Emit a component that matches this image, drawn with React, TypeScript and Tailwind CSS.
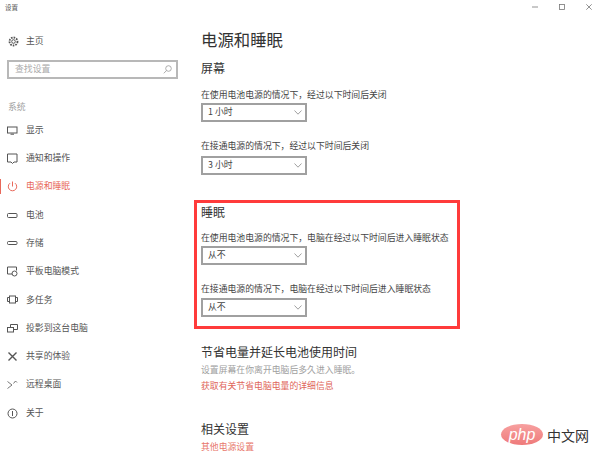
import React from "react";

const cjk = { fontFamily: '"Noto Sans CJK SC", sans-serif' };

const s = { fill: "none", stroke: "currentColor", strokeWidth: 1 };

function Ico({ children }: { children: React.ReactNode }) {
  return (
    <svg width="11" height="11" viewBox="0 0 11 11" {...s} className="shrink-0">
      {children}
    </svg>
  );
}

const items: [string, React.ReactNode, boolean?][] = [
  ["显示", <><rect x=".5" y="2" width="9.500" height="6" /><path d="M3.500 9.200h3.500" /></>],
  ["通知和操作", <><path d="M.5 1h9.500v8H7L5.500 10.500 4 9H.5z" /></>],
  ["电源和睡眠", <><path d="M5.500 .5v5" /><path d="M3 2.200a4.200 4.200 0 1 0 5 0" /></>, true],
  ["电池", <><rect x=".5" y="3.500" width="9.500" height="4" rx="1" /></>],
  ["存储", <><rect x=".5" y="3.500" width="9.500" height="3" rx="1" /></>],
  ["平板电脑模式", <><path d="M5.500 8H.5V1h9v3.500" /><circle cx="7.500" cy="7.500" r="2.500" /></>],
  ["多任务", <><rect x="2.500" y="2" width="6" height="7" /><path d="M2.500 3.500H.5v4h2M8.500 3.500h2v4h-2" /></>],
  ["投影到这台电脑", <><path d="M3.500 4V1.500h7v5H7" /><rect x=".5" y="4.500" width="6" height="4.500" /></>],
  ["共享的体验", <><path d="M1.500 1.500l8 8M9.500 1.500l-8 8" strokeWidth="1.400" /></>],
  ["远程桌面", <><path d="M.5 9.500l4.500-3.500M.5 2.500l4.500 3.500M6.500 4.500l2-2.500 1.500 1.500" strokeWidth=".8" /></>],
  ["关于", <><circle cx="5.500" cy="5.500" r="4.500" /><path d="M5.500 3v5" /></>],
];

function Dropdown({ value }: { value: string }) {
  return (
    <div className="flex h-[19px] w-[106px] items-center justify-between border-2 border-[#a0a0a0] bg-white pl-[5px] pr-[3px] text-[8.860px] leading-none text-[#444]">
      <span>{value}</span>
      <svg width="8" height="5" viewBox="0 0 8 5" fill="none" stroke="#888" strokeWidth="0.8">
        <path d="M.5 .5L4 4.200 7.500 .5" />
      </svg>
    </div>
  );
}

export default function App() {
  return (
    <div className="relative flex h-[468px] w-[600px] overflow-hidden bg-white text-[8.860px] text-[#444]" style={cjk}>
      <aside className="flex w-[194px] shrink-0 flex-col">
        <div className="h-[14px] pl-[5px] pt-[2px] text-[6.500px] leading-[10px] text-[#555]">设置</div>
        <div className="mt-[21px] flex h-[12px] items-center gap-[4px] pl-[7px] text-[#555]">
          <svg width="11" height="11" viewBox="0 0 11 11" fill="none" stroke="currentColor" className="ml-px shrink-0">
            <circle cx="5.500" cy="5.500" r="1.800" />
            <circle cx="5.500" cy="5.500" r="4" strokeWidth="1.800" strokeDasharray="1.600 1.040" />
          </svg>
          <span className="ml-[3px] leading-none">主页</span>
        </div>
        <div className="ml-[7px] mt-[13px] flex h-[19px] w-[171px] items-center justify-between border-2 border-[#b8b8b8] pl-[6px] pr-[4px] text-[#aaa]">
          <span className="leading-none">查找设置</span>
          <svg width="9" height="9" viewBox="0 0 9 9" fill="none" stroke="#999" strokeWidth="0.8">
            <circle cx="5.500" cy="3.500" r="2.800" />
            <path d="M3.500 5.500L.8 8.300" />
          </svg>
        </div>
        <div className="ml-[8px] mt-[22px] h-[12px] leading-[12px] text-[#a0a0a0]">系统</div>
        <nav className="mt-[3px] flex flex-col">
          {items.map(([label, icon, active]) => (
            <div
              key={label}
              className={`relative flex h-[28.300px] items-center gap-[8px] pl-[7px] ${active ? "text-[#e8685a]" : "text-[#555]"}`}
            >
              {active && <span className="absolute left-0 top-[6px] h-[15px] w-px bg-[#e8685a]" />}
              <Ico>{icon}</Ico>
              <span className="leading-none">{label}</span>
            </div>
          ))}
        </nav>
      </aside>
      <main className="flex flex-1 flex-col pt-[28px]">
        <div className="pl-[7px]">
          <h1 className="h-[22px] text-[16.400px] font-normal leading-[22px] text-[#333]">电源和睡眠</h1>
          <h2 className="mt-[10px] h-[16px] text-[12px] font-normal leading-[16px] text-[#333]">屏幕</h2>
          <p className="mt-[11px] h-[14px] leading-[16px]">在使用电池电源的情况下，经过以下时间后关闭</p>
          <div className="mt-[2px]"><Dropdown value="1 小时" /></div>
          <p className="mt-[16px] h-[14px] leading-[16px]">在接通电源的情况下，经过以下时间后关闭</p>
          <div className="mt-[4px]"><Dropdown value="3 小时" /></div>
        </div>
        <section className="mt-[25px] h-[129px] w-[266px] border-[3px] border-[#ff3b3b] pl-[4px] pt-[1px]">
          <h2 className="h-[16px] text-[12px] font-normal leading-[16px] text-[#333]">睡眠</h2>
          <p className="mt-[10px] h-[14px] leading-[16px]">在使用电池电源的情况下，电脑在经过以下时间后进入睡眠状态</p>
          <div className="mt-[2px]"><Dropdown value="从不" /></div>
          <p className="mt-[16px] h-[14px] leading-[16px]">在接通电源的情况下，电脑在经过以下时间后进入睡眠状态</p>
          <div className="mt-[3px]"><Dropdown value="从不" /></div>
        </section>
        <div className="pl-[7px]">
          <h2 className="mt-[15px] h-[16px] text-[12px] font-normal leading-[16px] text-[#333]">节省电量并延长电池使用时间</h2>
          <p className="mt-[2px] h-[14px] leading-[16px] text-[#a0a0a0]">设置屏幕在你离开电脑后多久进入睡眠。</p>
          <p className="mt-[2px] h-[14px] leading-[16px] text-[#e0655a]">获取有关节省电脑电量的详细信息</p>
          <h2 className="mt-[29px] h-[16px] text-[12px] font-normal leading-[16px] text-[#333]">相关设置</h2>
          <p className="mt-[2px] h-[14px] leading-[16px] text-[#e8786c]">其他电源设置</p>
        </div>
      </main>
      <div className="absolute right-[8px] top-[4px] flex items-center gap-[21px] text-[#777]">
        <svg width="6" height="6" viewBox="0 0 6 6" stroke="currentColor" fill="none"><path d="M0 3h6" strokeWidth="0.8" /></svg>
        <svg width="6" height="6" viewBox="0 0 6 6" stroke="currentColor" fill="none" strokeWidth="0.8"><rect x=".5" y=".5" width="5" height="5" /></svg>
        <svg width="6" height="6" viewBox="0 0 6 6" stroke="currentColor" fill="none" strokeWidth="0.8"><path d="M.3 .3l5.400 5.400M5.700 .3L.3 5.700" /></svg>
      </div>
      <div className="absolute bottom-[23px] right-[11px] flex items-center gap-[4px]">
        <div className="flex h-[21px] w-[42px] items-center justify-center rounded-[50%] bg-gradient-to-b from-[#f7a0a0] to-[#ee7a7a] text-[16px] italic leading-none text-white" style={{ fontFamily: '"Liberation Sans", sans-serif' }}>php</div>
        <span className="w-[42px] text-[14px] leading-none text-[#333]">中文网</span>
      </div>
    </div>
  );
}
